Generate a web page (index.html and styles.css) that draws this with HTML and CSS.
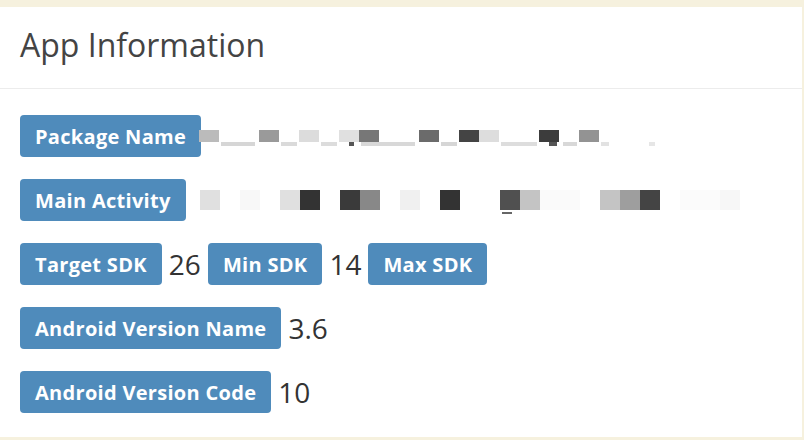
FILE: index.html
```html
<!DOCTYPE html>
<html lang="en">
<head>
<meta charset="utf-8">
<title>App Information</title>
<link rel="stylesheet" href="styles.css">
</head>
<body>
  <div class="card">
    <div class="card-header">
      <h3 class="card-title">App Information</h3>
    </div>
    <div class="card-body">
      <div class="row">
        <span class="tag">Package Name</span>
        <span class="mosaic mosaic-pkg"></span>
      </div>
      <div class="row">
        <span class="tag">Main Activity</span>
        <span class="mosaic mosaic-act"></span>
      </div>
      <div class="row">
        <span class="tag">Target SDK</span>
        <span class="value">26</span>
        <span class="tag">Min SDK</span>
        <span class="value">14</span>
        <span class="tag">Max SDK</span>
      </div>
      <div class="row">
        <span class="tag">Android Version Name</span>
        <span class="value">3.6</span>
      </div>
      <div class="row">
        <span class="tag">Android Version Code</span>
        <span class="value">10</span>
      </div>
    </div>
  </div>
</body>
</html>
```
FILE: styles.css
```css
* { box-sizing: border-box; }

html, body {
  margin: 0;
  padding: 0;
  height: 100%;
}

body {
  background: #f6f1de;
  font-family: "Open Sans", "Liberation Sans", sans-serif;
  overflow: hidden;
}

.card {
  margin: 7px 2px 0 0;
  height: 430px;
  background: #ffffff;
}

.card-header {
  height: 82px;
  padding: 0 20px 6px;
  border-bottom: 1px solid #ececec;
}

.card-title {
  margin: 0;
  font-size: 32px;
  font-weight: 400;
  line-height: 75px;
  color: #444444;
}

.card-body {
  padding: 26px 20px 0;
  display: flex;
  flex-direction: column;
  gap: 22px;
}

.row {
  display: flex;
  align-items: center;
  gap: 6px;
  height: 42px;
}

.tag {
  display: inline-flex;
  align-items: center;
  height: 42px;
  padding: 0 15px 0 15px;
  background: #4f8bbb;
  color: #ffffff;
  border-radius: 4px;
  font-size: 20px;
  letter-spacing: 0.3px;
  font-weight: 700;
  white-space: nowrap;
}

.value {
  font-size: 28px;
  color: #333333;
  padding: 0 1px;
}

.mosaic {
  display: block;
  align-self: flex-start;
  width: 560px;
}

.mosaic-pkg {
  margin-left: -8px;
  margin-top: 15px;
  height: 16px;
  background:
    linear-gradient(to right,
      #bbbbbb 0 20px, transparent 20px 60px,
      #9a9a9a 60px 80px, transparent 80px 100px,
      #dcdcdc 100px 120px, transparent 120px 140px,
      #e0e0e0 140px 160px, #777777 160px 180px, transparent 180px 220px,
      #6b6b6b 220px 240px, transparent 240px 260px,
      #444444 260px 280px, #dddddd 280px 300px, transparent 300px 340px,
      #3c3c3c 340px 360px, transparent 360px 380px,
      #939393 380px 400px, transparent 400px) top left / 100% 12px no-repeat,
    linear-gradient(to right,
      transparent 0 22px, #d6d6d6 22px 56px, transparent 56px 82px,
      #dadada 82px 98px, transparent 98px 122px, #dcdcdc 122px 138px,
      transparent 138px 150px, #555555 150px 155px, transparent 155px 162px,
      #d8d8d8 162px 216px, transparent 216px 242px, #d6d6d6 242px 258px,
      transparent 258px 302px, #dddddd 302px 338px, transparent 338px 350px,
      #555555 350px 358px, transparent 358px 364px, #d8d8d8 364px 378px,
      transparent 378px 402px, #e2e2e2 402px 410px, transparent 410px 450px,
      #e6e6e6 450px 456px, transparent 456px) bottom left / 100% 4px no-repeat;
}

.mosaic-act {
  margin-left: 8px;
  margin-top: 11px;
  height: 25px;
  background:
    linear-gradient(to right,
      #e0e0e0 0 20px, transparent 20px 40px,
      #f8f8f8 40px 60px, transparent 60px 80px,
      #e0e0e0 80px 100px, #333333 100px 120px, transparent 120px 140px,
      #3a3a3a 140px 160px, #888888 160px 180px, transparent 180px 200px,
      #f0f0f0 200px 220px, transparent 220px 240px,
      #333333 240px 260px, transparent 260px 300px,
      #505050 300px 320px, #c4c4c4 320px 340px, #fafafa 340px 380px,
      transparent 380px 400px,
      #c4c4c4 400px 420px, #9e9e9e 420px 440px, #444444 440px 460px,
      transparent 460px 480px, #fbfbfb 480px 520px, #f7f7f7 520px 540px,
      transparent 540px) top left / 100% 20px no-repeat,
    linear-gradient(to right,
      transparent 0 302px, #666666 302px 312px, transparent 312px) left 22px / 100% 2px no-repeat;
}
```
